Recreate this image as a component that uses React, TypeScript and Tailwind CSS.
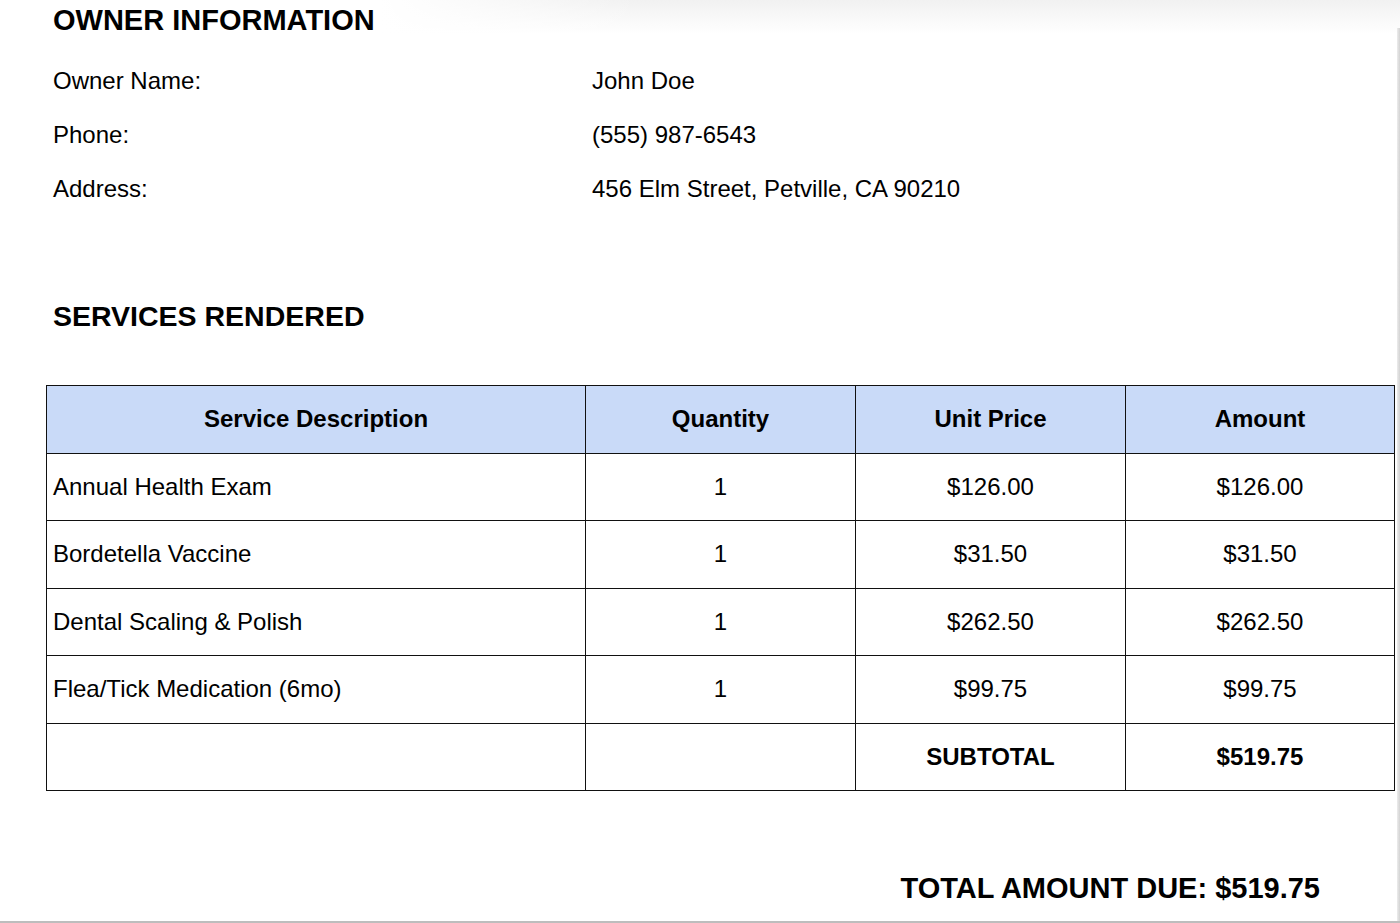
const OWNER = [
  { label: "Owner Name:", value: "John Doe" },
  { label: "Phone:", value: "(555) 987-6543" },
  { label: "Address:", value: "456 Elm Street, Petville, CA 90210" },
];

const SERVICES = [
  { desc: "Annual Health Exam", qty: "1", unit: "$126.00", amount: "$126.00" },
  { desc: "Bordetella Vaccine", qty: "1", unit: "$31.50", amount: "$31.50" },
  { desc: "Dental Scaling & Polish", qty: "1", unit: "$262.50", amount: "$262.50" },
  { desc: "Flea/Tick Medication (6mo)", qty: "1", unit: "$99.75", amount: "$99.75" },
];

const cell = "border border-[#111] h-[67.5px] px-[6px]";

export default function App() {
  return (
    <div className="relative h-[923px] w-[1400px] overflow-hidden bg-white font-['Liberation_Sans',Arial,sans-serif] text-black">
      {/* page edge shading */}
      <div className="pointer-events-none absolute left-[380px] right-0 top-0 h-[34px] bg-gradient-to-b from-[#f1f1f1] to-white" />
      <div className="pointer-events-none absolute left-[380px] top-0 h-[34px] w-[260px] bg-gradient-to-r from-white to-transparent" />
      <div className="pointer-events-none absolute right-0 top-[28px] bottom-0 w-[3px] bg-gradient-to-r from-[#ececec] to-[#d2d2d2]" />
      <div className="pointer-events-none absolute bottom-0 left-0 right-0 h-[2px] bg-[#bdbdbd]" />

      <div className="relative pl-[46px] pr-[6px]">
        <h2 className="h-[40px] pl-[7px] text-[29px] font-bold leading-[40px]">OWNER INFORMATION</h2>

        <div className="mt-[14px]">
          {OWNER.map((o) => (
            <div key={o.label} className="grid h-[54px] grid-cols-[539px_1fr] items-center text-[24px]">
              <span className="pl-[7px]">{o.label}</span>
              <span className="pl-[7px]">{o.value}</span>
            </div>
          ))}
        </div>

        <h2 className="mt-[80px] h-[40px] pl-[7px] text-[28.5px] font-bold leading-[40px]">SERVICES RENDERED</h2>

        <table className="mt-[49px] w-[1348px] table-fixed border-collapse text-[24px]">
          <colgroup>
            <col className="w-[539px]" />
            <col className="w-[270px]" />
            <col className="w-[270px]" />
            <col className="w-[269px]" />
          </colgroup>
          <thead>
            <tr className="bg-[#c9daf8] font-bold">
              <th className={`${cell} text-center`}>Service Description</th>
              <th className={`${cell} text-center`}>Quantity</th>
              <th className={`${cell} text-center`}>Unit Price</th>
              <th className={`${cell} text-center`}>Amount</th>
            </tr>
          </thead>
          <tbody>
            {SERVICES.map((s) => (
              <tr key={s.desc}>
                <td className={`${cell} text-left`}>{s.desc}</td>
                <td className={`${cell} text-center`}>{s.qty}</td>
                <td className={`${cell} text-center`}>{s.unit}</td>
                <td className={`${cell} text-center`}>{s.amount}</td>
              </tr>
            ))}
            <tr>
              <td className={cell} />
              <td className={cell} />
              <td className={`${cell} text-center font-bold`}>SUBTOTAL</td>
              <td className={`${cell} text-center font-bold`}>$519.75</td>
            </tr>
          </tbody>
        </table>

        <div className="mt-[78px] flex h-[40px] items-center justify-end pr-[74px] text-[29px] font-bold">
          TOTAL AMOUNT DUE: $519.75
        </div>
      </div>
    </div>
  );
}
